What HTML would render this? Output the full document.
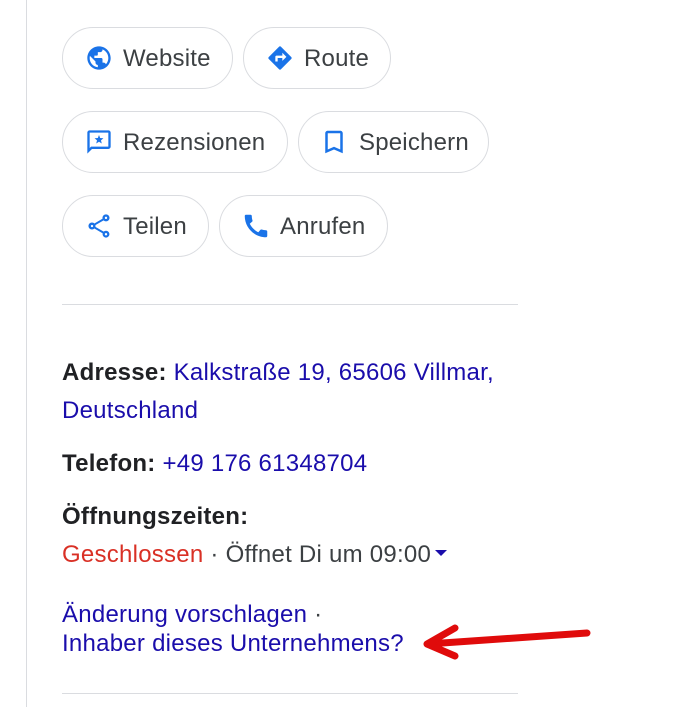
<!DOCTYPE html>
<html><head><meta charset="utf-8"><style>
body{margin:0;width:695px;height:707px;background:#fff;position:relative;overflow:hidden;font-family:"Liberation Sans",Arial,sans-serif;}
.vl{position:absolute;left:26px;top:0;width:1px;height:707px;background:#dadce0}
.btn{position:absolute;height:60px;border:1px solid #dadce0;border-radius:31px;box-sizing:content-box;font-size:24px;color:#3c4043;letter-spacing:0.2px}
.btn svg{position:absolute;left:22px;top:16px}
.btn span{position:absolute;left:60px;top:17px;line-height:28px;white-space:nowrap}
.hr{position:absolute;left:62px;width:456px;height:1px;background:#dadce0}
.t{position:absolute;left:62px;font-size:24px;line-height:28px;color:#202124;white-space:nowrap;letter-spacing:0.25px}
.b{font-weight:bold;color:#202124}
a{color:#1a0dab;text-decoration:none}
</style></head><body>
<div class="vl"></div>

<div class="btn" style="left:62px;top:27px;width:169px"><svg width="28" height="28" viewBox="0 0 24 24"><path fill="#1a73e8" d="M12 2C6.48 2 2 6.48 2 12s4.48 10 10 10 10-4.48 10-10S17.52 2 12 2zm-1 17.93c-3.95-.49-7-3.85-7-7.93 0-.62.08-1.21.21-1.79L9 15v1c0 1.1.9 2 2 2v1.93zm6.9-2.54c-.26-.81-1-1.39-1.9-1.39h-1v-3c0-.55-.45-1-1-1H8v-2h2c.55 0 1-.45 1-1V7h2c1.1 0 2-.9 2-2v-.41c2.93 1.19 5 4.06 5 7.41 0 2.08-.8 3.97-2.1 5.39z"/></svg><span>Website</span></div>
<div class="btn" style="left:243px;top:27px;width:146px"><svg width="28" height="28" viewBox="0 0 24 24"><path fill="#1a73e8" d="M21.71 11.29l-9-9a1 1 0 00-1.42 0l-9 9a1 1 0 000 1.42l9 9a1 1 0 001.42 0l9-9a1 1 0 000-1.42zM14 14.5V12h-4v3H8v-4c0-.55.45-1 1-1h5V7.5l3.5 3.5-3.5 3.5z"/></svg><span>Route</span></div>

<div class="btn" style="left:62px;top:111px;width:224px"><svg width="28" height="28" viewBox="0 0 24 24"><path fill="#1a73e8" d="M20 2H4c-1.1 0-2 .9-2 2v18l4-4h14c1.1 0 2-.9 2-2V4c0-1.1-.9-2-2-2zm0 14H5.17L4 17.17V4h16v12z"/><path fill="#1a73e8" d="M12 6l1 2.6 2.8.2-2.1 1.8.7 2.7L12 11.8l-2.4 1.5.7-2.7-2.1-1.8 2.8-.2z"/></svg><span>Rezensionen</span></div>
<div class="btn" style="left:298px;top:111px;width:189px"><svg width="30" height="30" viewBox="0 0 24 24" style="left:20px;top:15px"><path fill="#1a73e8" d="M17 3H7c-1.1 0-2 .9-2 2v16l7-3 7 3V5c0-1.1-.9-2-2-2zm0 15l-5-2.18L7 18V5h10v13z"/></svg><span style="left:60px">Speichern</span></div>

<div class="btn" style="left:62px;top:195px;width:145px"><svg width="28" height="28" viewBox="0 0 24 24"><path fill="#1a73e8" d="M18 16.08c-.76 0-1.44.3-1.96.77L8.91 12.7c.05-.23.09-.46.09-.7s-.04-.47-.09-.7l7.05-4.11c.54.5 1.25.81 2.04.81 1.66 0 3-1.34 3-3s-1.34-3-3-3-3 1.34-3 3c0 .24.04.47.09.7L8.04 9.81C7.5 9.31 6.79 9 6 9c-1.66 0-3 1.34-3 3s1.34 3 3 3c.79 0 1.5-.31 2.04-.81l7.12 4.16c-.05.21-.08.43-.08.65 0 1.61 1.31 2.92 2.92 2.92s2.92-1.31 2.92-2.92-1.31-2.92-2.92-2.92zM18 4c.55 0 1 .45 1 1s-.45 1-1 1-1-.45-1-1 .45-1 1-1zM6 13c-.55 0-1-.45-1-1s.45-1 1-1 1 .45 1 1-.45 1-1 1zm12 7.02c-.55 0-1-.45-1-1s.45-1 1-1 1 .45 1 1-.45 1-1 1z"/></svg><span>Teilen</span></div>
<div class="btn" style="left:219px;top:195px;width:167px"><svg width="30" height="30" viewBox="0 0 24 24" style="left:21px;top:15px"><path fill="#1a73e8" d="M20.01 15.38c-1.23 0-2.420-.2-3.53-.56a.977.977 0 00-1.01.24l-1.57 1.97c-2.83-1.35-5.48-3.9-6.89-6.83l1.95-1.66c.27-.28.35-.67.24-1.02-.37-1.11-.56-2.3-.56-3.53 0-.54-.45-.99-.99-.99H4.19C3.65 3 3 3.24 3 3.99 3 13.28 10.73 21 20.01 21c.71 0 .99-.63.99-1.18v-3.45c0-.54-.45-.99-.99-.99z"/></svg><span>Anrufen</span></div>

<div class="hr" style="top:304px"></div>

<div class="t" style="top:359px"><span class="b">Adresse:</span> <a>Kalkstraße 19, 65606 Villmar,</a></div>
<div class="t" style="top:397px"><a>Deutschland</a></div>
<div class="t" style="top:450px"><span class="b">Telefon:</span> <a>+49 176 61348704</a></div>
<div class="t" style="top:503px"><span class="b">Öffnungszeiten:</span></div>
<div class="t" style="top:541px;color:#3c4043"><span style="color:#d93025">Geschlossen</span> · Öffnet Di um 09:00<svg width="14" height="8" viewBox="0 0 14 8" style="margin-left:3px;vertical-align:5px"><path d="M1 1h12L7 7z" fill="#1a0dab"/></svg></div>
<div class="t" style="top:601px"><a>Änderung vorschlagen</a> <span style="color:#3c4043">·</span></div>
<div class="t" style="top:630px"><a>Inhaber dieses Unternehmens?</a></div>

<svg style="position:absolute;left:0;top:0" width="695" height="707"><g stroke="#e00b0b" stroke-width="7" stroke-linecap="round" stroke-linejoin="round" fill="none"><path d="M587 633L428 644"/><path d="M427 644L455 628M427 644L455 656"/></g></svg>

<div class="hr" style="top:693px"></div>
</body></html>
